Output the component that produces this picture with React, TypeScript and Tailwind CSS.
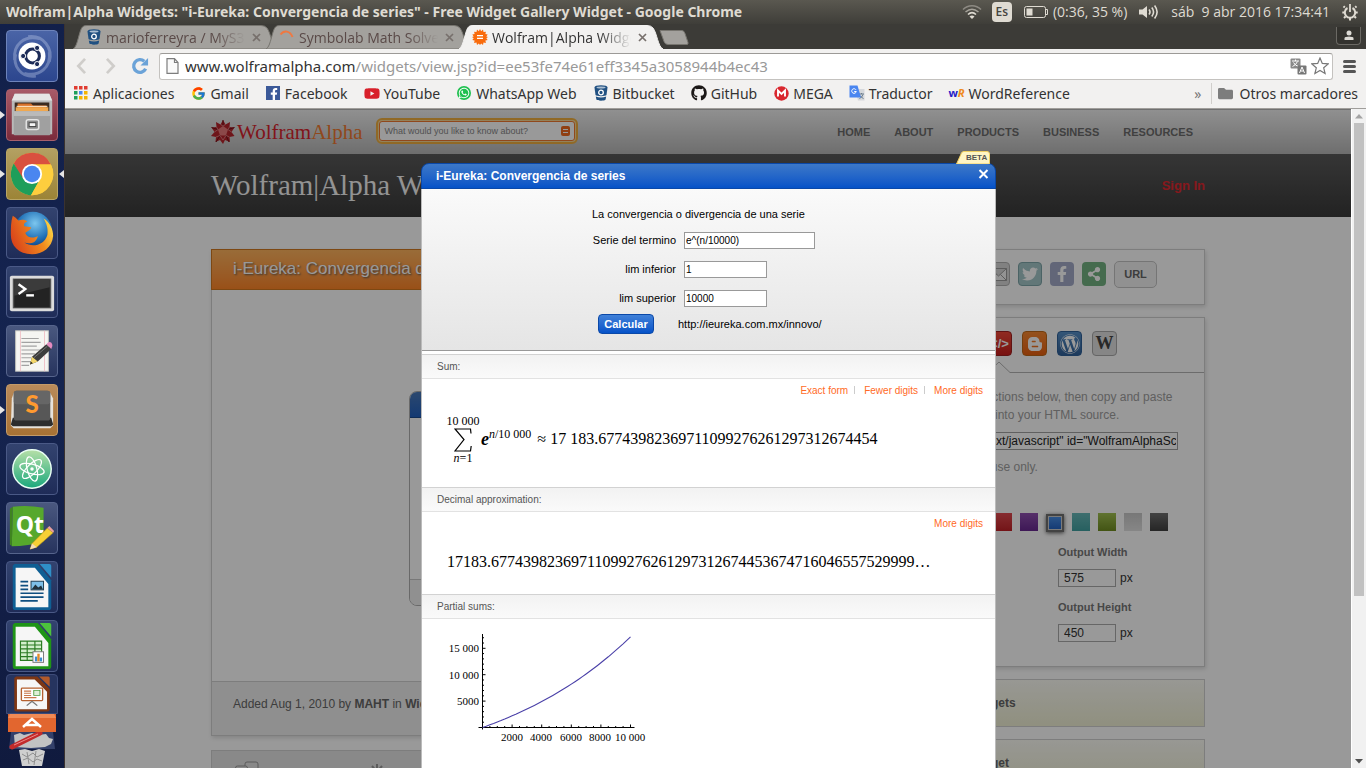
import React from "react";
import { FcGoogle } from "react-icons/fc";
import {
  FaBloggerB,
  FaFacebookF,
  FaFolder,
  FaGithub,
  FaShareAlt,
  FaTwitter,
  FaWhatsapp,
  FaWordpress,
  FaYoutube,
} from "react-icons/fa";

/* ---------- desktop top bar ---------- */

function WifiIcon() {
  return (
    <svg width="20" height="16" viewBox="0 0 20 16" fill="none" strokeWidth="1.5">
      <path d="M1 5.5C6 .5 14 .5 19 5.5" stroke="#8d8a83" />
      <path d="M3.5 8C7.500 4.500 12.500 4.500 16.500 8" stroke="#a5a29a" />
      <path d="M6 10.500C8.500 8 11.500 8 14 10.500" stroke="#dfdbd2" />
      <path d="M7.500 12.500C9 11 11 11 12.500 12.500L10 15z" fill="#dfdbd2" />
    </svg>
  );
}

function SoundIcon() {
  return (
    <svg width="20" height="16" viewBox="0 0 20 16" fill="none" stroke="#dfdbd2" strokeWidth="1.600">
      <path d="M0 5.500h3.500L8 2v12l-4.500-3.500H0z" fill="#dfdbd2" stroke="none" />
      <path d="M10 5.500q2 2.500 0 5M12.800 3.500q3.500 4.500 0 9M15.600 1.500q5 6.500 0 13" />
    </svg>
  );
}

function GearPowerIcon() {
  return (
    <svg width="16" height="18" viewBox="0 0 16 18" fill="none" stroke="#dfdbd2">
      <path d="M5.500 5A5.200 5.200 0 1 0 10.500 5" strokeWidth="2" />
      <path d="M8 1v8" strokeWidth="1.800" />
      <path d="M2.800 4.500L1.500 3.200M13.200 4.500l1.300-1.300M2.500 9.500H.3M13.500 9.500h2.200M3.500 13.500L2 15M12.500 13.500L14 15M8 15v2.500" strokeWidth="2" />
    </svg>
  );
}

function TopBar() {
  return (
    <header className="flex h-6 shrink-0 items-center justify-between bg-gradient-to-b from-[#5a5850] to-[#3f3e39] pb-px pl-1.5 pr-2 text-[#dfdbd2]">
      <h1 className="truncate font-['Noto_Sans',sans-serif] text-[14px] font-bold">
        Wolfram|Alpha Widgets: "i-Eureka: Convergencia de series" - Free Widget Gallery Widget - Google Chrome
      </h1>
      <div className="flex shrink-0 items-center text-[14px]">
        <WifiIcon />
        <span className="ml-2.5 flex h-5 w-5 items-center justify-center rounded-sm bg-[#dfdbd2] text-[12px] font-semibold text-[#45443f]">Es</span>
        <svg className="ml-3" width="25" height="14" viewBox="0 0 25 14" fill="none" stroke="#dfdbd2">
          <rect x=".5" y="1.500" width="21" height="11" rx="2" />
          <path d="M22 4.500h1.500v5H22" />
          <rect x="2.500" y="3.500" width="6" height="7" fill="#dfdbd2" stroke="none" />
        </svg>
        <span className="ml-1">(0:36, 35 %)</span>
        <span className="ml-3"><SoundIcon /></span>
        <span className="ml-3 whitespace-pre">sáb  9 abr 2016 17:34:41</span>
        <span className="ml-3"><GearPowerIcon /></span>
      </div>
    </header>
  );
}

/* ---------- launcher ---------- */

function UbuntuIcon() {
  return (
    <svg viewBox="0 0 52 52" className="h-full w-full">
      <g fill="none" stroke="#b9c6e6" strokeWidth="3" opacity=".4">
        <path d="M8 30C6 14 18 4 34 8" />
        <path d="M22 6c16-2 26 12 22 26" />
        <path d="M44 22c2 16-10 26-26 22" />
        <path d="M30 47C14 49 6 36 9 24" />
      </g>
      <circle cx="26" cy="26" r="14" fill="#fff" />
      <circle cx="26.500" cy="26" r="7.200" fill="none" stroke="#1d2c58" strokeWidth="3.200" />
      <g fill="#1d2c58" stroke="#fff" strokeWidth="1">
        <circle cx="16.800" cy="26" r="2.700" />
        <circle cx="31.300" cy="17.600" r="2.700" />
        <circle cx="31.300" cy="34.400" r="2.700" />
      </g>
    </svg>
  );
}

function FilesIcon() {
  return (
    <svg viewBox="0 0 52 52" className="h-full w-full">
      <path d="M8 4h36l3 7v35H5V11z" fill="#b9b9b9" />
      <path d="M8 4h36l3 7H5z" fill="#e6e6e6" />
      <rect x="8" y="13" width="36" height="10" fill="#3a2a20" />
      <path d="M11 14h14l2 2h14v7H11z" fill="#d8702a" />
      <path d="M9 18h34v4H9z" fill="#f0a850" />
      <path d="M10 17h32" stroke="#fff3dc" />
      <rect x="7" y="22" width="38" height="25" rx="1" fill="#a0a0a0" />
      <rect x="7" y="22" width="38" height="5" fill="#bababa" />
      <rect x="20" y="31" width="13" height="10" rx="2" fill="#8b8b8b" stroke="#e4e4e4" strokeWidth="1.500" />
      <rect x="23" y="34" width="7" height="4" fill="#f5f5f5" stroke="#444" />
    </svg>
  );
}

function ChromeIcon() {
  return (
    <svg viewBox="0 0 52 52" className="h-full w-full">
      <circle cx="26" cy="26" r="22" fill="#fc3" />
      <path d="M7 15A22 22 0 0 1 45.700 16H26L16 32z" fill="#d9503f" />
      <path d="M7 15A22 22 0 0 0 25 48L34.500 31.500 26 36 17 31z" fill="#1e9e5a" />
      <path d="M45.700 16H26l8.500 15L25 48A22 22 0 0 0 45.700 16z" fill="#fdce3e" />
      <circle cx="26" cy="26" r="10.500" fill="#fff" />
      <circle cx="26" cy="26" r="8.600" fill="#4a86f0" />
    </svg>
  );
}

function FirefoxIcon() {
  return (
    <svg viewBox="0 0 52 52" className="h-full w-full">
      <defs>
        <radialGradient id="ffGlobe" cx=".55" cy=".3" r=".7">
          <stop offset="0" stopColor="#7cc6ee" />
          <stop offset=".6" stopColor="#1f6fb6" />
          <stop offset="1" stopColor="#0d2f6a" />
        </radialGradient>
        <linearGradient id="ffTail" x1="0" x2="1" y1=".6" y2=".2">
          <stop offset="0" stopColor="#d9431b" />
          <stop offset=".6" stopColor="#f08a1d" />
          <stop offset="1" stopColor="#ffe14a" />
        </linearGradient>
      </defs>
      <circle cx="27" cy="24" r="20" fill="url(#ffGlobe)" />
      <path d="M6 8c2 1 4 3 6 5 3-1 6-1 9 1-3 1-4 3-3 5l7 1c0 3-4 4-6 6 2 5 8 6 13 3-1 7-8 9-14 7 9 6 21 2 24-8 1-7-1-12-4-17 7 4 10 12 10 18-1 12-11 19-22 19C12 48 4 39 4 28 4 21 4 14 6 8z" fill="url(#ffTail)" />
    </svg>
  );
}

function TerminalIcon() {
  return (
    <svg viewBox="0 0 52 52" className="h-full w-full">
      <rect x="3" y="9" width="46" height="37" rx="2" fill="#dcdcdc" />
      <rect x="6" y="12" width="40" height="31" fill="#555" />
      <rect x="7.500" y="13" width="37" height="29" fill="#232323" />
      <path d="M7.500 13h37v8L7.500 30z" fill="#3b3b3b" />
      <path d="M12 18l7 5-7 5" fill="none" stroke="#fff" strokeWidth="2.500" />
      <path d="M20 29.500h8" stroke="#fff" strokeWidth="2.500" />
    </svg>
  );
}

function EditorIcon() {
  return (
    <svg viewBox="0 0 52 52" className="h-full w-full">
      <rect x="9" y="5" width="34" height="42" fill="#f5f5f2" stroke="#c6c6c0" />
      <path d="M14 5v42M39 5v42" stroke="#eec2c8" />
      <path d="M15 13h18M15 17h20M15 21h16M15 25h20M15 29h14M15 33h10M15 37h10M15 41h8" stroke="#a2a2a2" strokeWidth="1.200" />
      <path d="M24 40l2-8L41 19l5 5-14 13z" fill="#3c3c3c" />
      <path d="M24 40l2-8 6 5z" fill="#f3d76a" />
      <path d="M24 40l.8-3 2 1.700z" fill="#222" />
      <path d="M41 19l2-2q3-1 4 2 1 2-1 5z" fill="#e58bc0" />
      <path d="M28 33l14-12" stroke="#777" />
    </svg>
  );
}

function SublimeIcon() {
  return (
    <svg viewBox="0 0 52 52" className="h-full w-full">
      <path d="M5 14l2-6h38l3 6v28l-3 3H7l-3-3z" fill="#e6e2dc" />
      <path d="M6 34h40l2 7-2 2H6l-2-2z" fill="#2d2d2d" />
      <rect x="7" y="6" width="38" height="31" rx="3" fill="#575757" />
      <rect x="7" y="6" width="38" height="14" rx="3" fill="#666" />
      <text x="26" y="29" fontSize="25" fontWeight="900" textAnchor="middle" fill="#ff9a2f" fontFamily="Lato, sans-serif">S</text>
    </svg>
  );
}

function AtomIcon() {
  return (
    <svg viewBox="0 0 52 52" className="h-full w-full">
      <defs>
        <linearGradient id="atomDisc" x1="0" x2="0" y1="0" y2="1">
          <stop offset="0" stopColor="#b7e0a8" />
          <stop offset="1" stopColor="#1aa87c" />
        </linearGradient>
      </defs>
      <circle cx="26" cy="26" r="20" fill="url(#atomDisc)" stroke="#eafff5" strokeWidth="1.500" />
      <g fill="none" stroke="#fff" strokeWidth="1.300">
        <ellipse cx="26" cy="26" rx="13" ry="5" transform="rotate(15 26 26)" />
        <ellipse cx="26" cy="26" rx="13" ry="5" transform="rotate(75 26 26)" />
        <ellipse cx="26" cy="26" rx="13" ry="5" transform="rotate(135 26 26)" />
      </g>
      <circle cx="26" cy="26" r="1.800" fill="#fff" />
    </svg>
  );
}

function QtIcon() {
  return (
    <svg viewBox="0 0 52 52" className="h-full w-full">
      <path d="M6 4q15-2 32 1v35q-16 5-33 5z" fill="#56a82c" />
      <path d="M6 4l-3 2v37l2 2z" fill="#3f8420" />
      <text x="9" y="31" fontSize="24" fontWeight="700" fill="#fff" fontFamily="Open Sans, sans-serif">Qt</text>
      <path d="M24 48l2-6 16-16 6 5-17 15z" fill="#f7d035" stroke="#a9861a" strokeWidth=".6" />
      <path d="M24 48l2-6 5 4z" fill="#f5dcb6" />
      <path d="M42 26l2-2 5 5-1 2z" fill="#e9a0a0" />
    </svg>
  );
}

function OfficePage({ edge, fold, children }: { edge: string; fold: string; children: React.ReactNode }) {
  return (
    <svg viewBox="0 0 52 52" preserveAspectRatio="none" className="h-full w-full">
      <path d="M8 2h24l14 17v28q0 3-3 3H9q-3 0-3-3V4z" fill={edge} />
      <path d="M9 6h20l14 17v24H9z" fill="#f6f6f6" />
      <path d="M34 2h10q2 0 2 2v12z" fill={fold} />
      {children}
    </svg>
  );
}

function WriterIcon() {
  return (
    <OfficePage edge="#0f5f94" fold="#2f8fc8">
      <path d="M14 20.500h8M14 24.500h8M14 28.500h8M14 32.500h24M14 36.500h24M14 40.500h18" stroke="#0f4f80" strokeWidth="1.800" />
      <rect x="25" y="20" width="13" height="9" fill="#7ec0e8" stroke="#1d3c50" />
      <path d="M25.500 28.500l4-5 3 3 3-2 2 4z" fill="#22323c" />
    </OfficePage>
  );
}

function CalcIcon() {
  return (
    <OfficePage edge="#1f9417" fold="#4cc23c">
      <path d="M14 21h22v20H14z" fill="#d3efcb" />
      <path d="M14 21h22v20H14zM14 25h22M14 29h22M14 33h22M14 37h22M21 21v20M29 21v20" fill="none" stroke="#2a7a22" strokeWidth="1.200" />
      <rect x="27" y="32" width="11" height="11" fill="#fff" stroke="#777" />
      <path d="M29 42v-5h2.500v5z" fill="#3b8ed0" />
      <path d="M31.500 42v-8H34v8z" fill="#e58a2a" />
      <path d="M34 42v-4h2.500v4z" fill="#3b8ed0" />
    </OfficePage>
  );
}

function ImpressIcon() {
  return (
    <OfficePage edge="#7e3613" fold="#b35a2a">
      <rect x="14" y="18" width="24" height="17" rx="1" fill="#fff" stroke="#b5602f" strokeWidth="1.500" />
      <path d="M17 22h8M17 25h8M17 28h8M17 31h14" stroke="#c8774a" strokeWidth="1.500" />
      <rect x="28" y="21" width="7" height="7" fill="#dff0d8" stroke="#4a9a3a" />
      <path d="M20 42l6-6 6 6" fill="none" stroke="#777" strokeWidth="1.500" />
    </OfficePage>
  );
}

type App = { label: string; tile: string; icon: React.ReactNode; running?: boolean; active?: boolean };

const apps: App[] = [
  { label: "Buscar", tile: "from-[#4a64a6] to-[#2c468e] border-[#6d83bb]", icon: <UbuntuIcon /> },
  { label: "Archivos", tile: "from-[#a85a68] to-[#7a2b3b] border-[#a8606c]", icon: <FilesIcon />, running: true },
  { label: "Google Chrome", tile: "from-[#b3a062] to-[#9c8436] border-[#b8a566]", icon: <ChromeIcon />, running: true, active: true },
  { label: "Firefox", tile: "from-[#33436f] to-[#1f2c58] border-[#4a5986]", icon: <FirefoxIcon /> },
  { label: "Terminal", tile: "from-[#33436f] to-[#1f2c58] border-[#4a5986]", icon: <TerminalIcon /> },
  { label: "Editor de textos", tile: "from-[#4a587f] to-[#27345e] border-[#56648c]", icon: <EditorIcon /> },
  { label: "Sublime Text", tile: "from-[#b98a5a] to-[#a87234] border-[#c39a68]", icon: <SublimeIcon />, running: true },
  { label: "Atom", tile: "from-[#33436f] to-[#1f2c58] border-[#4a5986]", icon: <AtomIcon /> },
  { label: "Qt Creator", tile: "from-[#4a587f] to-[#27345e] border-[#56648c]", icon: <QtIcon /> },
  { label: "Writer", tile: "from-[#33436f] to-[#1f2c58] border-[#4a5986]", icon: <WriterIcon /> },
  { label: "Calc", tile: "from-[#33436f] to-[#1f2c58] border-[#4a5986]", icon: <CalcIcon /> },
];

function Launcher() {
  return (
    <nav aria-label="Lanzador" className="flex w-[65px] shrink-0 flex-col gap-[7px] overflow-hidden border-r border-[#3a3230] bg-gradient-to-b from-[#12204a] via-[#152450] to-[#101a3e] pt-1.5">
      {apps.map((a) => (
        <div key={a.label} className="flex shrink-0 items-center">
          <span className="w-1.5">
            {a.running && (
              <svg width="5" height="8" viewBox="0 0 5 8"><path d="M0 0l5 4-5 4z" fill="#e6e6e6" /></svg>
            )}
          </span>
          <button aria-label={a.label} className={"h-[52px] w-[52px] rounded-[4px] border bg-gradient-to-b " + a.tile}>
            {a.icon}
          </button>
          <span className="flex w-1.5 justify-end">
            {a.active && (
              <svg width="5" height="8" viewBox="0 0 5 8"><path d="M5 0L0 4l5 4z" fill="#e6e6e6" /></svg>
            )}
          </span>
        </div>
      ))}
      <div className="-mt-[5px] flex shrink-0 flex-col items-center">
        <button aria-label="Impress" className="h-10 w-[52px] rounded-t-[4px] border border-[#3d4b78] bg-[#26345f] px-0.5"><ImpressIcon /></button>
        <button aria-label="Centro de software" className="h-[18px] w-12 bg-[#e2662f]">
          <svg viewBox="0 0 48 18" className="h-full w-full">
            <path d="M2 0h44l2 4H0z" fill="#f08a55" />
            <path d="M15 13l9-8 9 8M18 11h12" fill="none" stroke="#fff" strokeWidth="2.500" />
          </svg>
        </button>
        <button aria-label="Configuración y papelera" className="h-9 w-[52px]">
          <svg viewBox="0 0 52 36" className="h-full w-full">
            <path d="M5 0h42l2 17H3z" fill="#33406a" />
            <path d="M8 3l6-2 4 2 8-2 6 2 8-1 3 4 4 1-2 5-6 3-14 1-16-1z" fill="#c2c2c2" />
            <path d="M6 15L34 1" stroke="#c22b2b" strokeWidth="5" strokeLinecap="round" />
            <path d="M8 13L32 2" stroke="#e88" strokeWidth="1" />
            <path d="M13 18l6-1 7 2 7-2 6 2-3 15H16z" fill="#cfcfcf" />
            <path d="M16 22l5 3 6-4 4 4 6-3M17 28l5-2 5 4 4-3 5 2M21 20l2 12M30 19l-2 14" fill="none" stroke="#8f8f8f" />
          </svg>
        </button>
      </div>
    </nav>
  );
}

/* ---------- browser chrome ---------- */

function BucketIcon() {
  return (
    <svg width="16" height="16" viewBox="0 0 16 16">
      <path d="M1.500 2.500C1.500 1 4 .3 8 .3s6.500.7 6.500 2.200l-1 7.500c-.5 1.500-10.500 1.500-11 0z" fill="#205081" />
      <path d="M2.800 11.500q5.200 2 10.400 0l-.6 3c-.6 1.600-8.600 1.600-9.200 0z" fill="#205081" />
      <ellipse cx="8" cy="2.600" rx="4.500" ry="1" fill="#e6edf3" opacity=".7" />
      <circle cx="8" cy="7.500" r="2.300" fill="none" stroke="#fff" strokeWidth="1.300" />
    </svg>
  );
}

function WolframBadge() {
  return (
    <svg width="16" height="16" viewBox="0 0 16 16">
      <path d="M8 0l1.200 2.200L11 .6l.5 2.500 2.400-.4-.5 2.400 2.300.5-1.400 1.900L16 8l-1.700 1.200 1.400 1.700-2.300.6.5 2.400-2.400-.4-.5 2.400-1.800-1.400L8 16l-1.200-1.500L5 15.900l-.5-2.400-2.400.4.5-2.400-2.300-.6 1.400-1.700L0 8l1.700-.5L.3 5.600l2.300-.5-.5-2.400 2.400.4L5 .6l1.800 1.600z" fill="#f96b0c" />
      <path d="M5 6h6v1.300H5zM5 8.700h6V10H5z" fill="#fff" />
    </svg>
  );
}

function Tab({ title, icon, active }: { title: string; icon: React.ReactNode; active?: boolean }) {
  const fill = active ? "#f2f1f0" : "#a3a19d";
  return (
    <div className={"relative -ml-[11px] flex h-6 w-[204px] items-center pl-3.5 pr-3.5 text-[14px] " + (active ? "z-10 text-[#333]" : "text-[#5a4a48]")}>
      <svg className="absolute inset-0 h-full w-full" viewBox="0 0 204 24" preserveAspectRatio="none">
        <path d="M0 24C5 22 6 4 10 1.500Q11 .5 14 .5H188Q192 .5 194 3C198 8 199 22 204 24z" fill={fill} stroke={active ? "#f2f1f0" : "#77756f"} />
      </svg>
      <span className="relative -ml-px flex w-4 justify-center">{icon}</span>
      <span className="relative ml-1 w-[139px] overflow-hidden whitespace-nowrap [mask-image:linear-gradient(to_right,black_78%,transparent)]">{title}</span>
      <button aria-label="Cerrar pestaña" className="relative ml-[7px]">
        <svg width="9" height="9" viewBox="0 0 9 9"><path d="M1 1l7 7M8 1L1 8" stroke="#77706c" strokeWidth="1.700" /></svg>
      </button>
    </div>
  );
}

function TabStrip() {
  return (
    <div className="flex h-[25px] items-end bg-[#3c3b37] pl-[19px]">
      <Tab title="marioferreyra / MyS3 Repo" icon={<BucketIcon />} />
      <Tab
        title="Symbolab Math Solver"
        icon={<svg width="16" height="16" viewBox="0 0 16 16"><path d="M1.500 5.500C5 1 11 1.500 13.500 8" fill="none" stroke="#f07840" strokeWidth="2" /></svg>}
      />
      <Tab title="Wolfram|Alpha Widgets" active icon={<WolframBadge />} />
      <button aria-label="Nueva pestaña" className="-ml-1 mb-1">
        <svg width="30" height="15" viewBox="0 0 30 15"><path d="M1 .5h22q2 0 3 3l3 9q.5 2-1 2H9q-3 0-4-3z" fill="#a3a19d" stroke="#77756f" /></svg>
      </button>
      <button aria-label="Usuario" className="mb-1 ml-auto mr-[5px] flex h-[18px] w-[25px] items-center justify-center rounded-b-[4px] border border-t-0 border-[#6b6964] bg-[#33322e]">
        <svg width="10" height="11" viewBox="0 0 10 11" fill="#dcdad5"><circle cx="5" cy="3" r="2.500" /><path d="M.5 10V8Q1 6.500 5 6.500T9.500 8v2z" /></svg>
      </button>
    </div>
  );
}

function Toolbar() {
  return (
    <div className="flex h-[31px] items-center bg-[#f2f1f0] pl-2 pr-2.5 pt-[3px]">
      <button aria-label="Atrás" className="flex w-4 justify-center">
        <svg width="14" height="18" viewBox="0 0 14 20"><path d="M11.500 2L4 10l7.500 8" fill="none" stroke="#cfcdca" strokeWidth="3" /></svg>
      </button>
      <button aria-label="Adelante" className="ml-3.5 flex w-4 justify-center">
        <svg width="14" height="18" viewBox="0 0 14 20"><path d="M2.500 2L10 10l-7.500 8" fill="none" stroke="#cfcdca" strokeWidth="3" /></svg>
      </button>
      <button aria-label="Recargar" className="ml-3">
        <svg width="18" height="18" viewBox="0 0 19 19">
          <path d="M15.500 12.500A6.700 6.700 0 1 1 14 4.500" fill="none" stroke="#6ba3d8" strokeWidth="3.500" />
          <path d="M18 1v8h-8z" fill="#6ba3d8" />
        </svg>
      </button>
      <div className="ml-2.5 flex h-[27px] flex-1 items-center rounded-[3px] border border-[#c4c2bf] border-t-[#9c9a97] bg-white pl-1.5 pr-[3px]">
        <svg width="13" height="16" viewBox="0 0 13 16"><path d="M1 .7h7.500L12 4.500v10.800H1zM8.500.7v3.800H12" fill="#fafafa" stroke="#7d7d7d" strokeWidth="1.200" /></svg>
        <p className="ml-1.5 flex-1 truncate font-['Noto_Sans',sans-serif] text-[15px] text-[#999]">
          <span className="text-[#333]">www.wolframalpha.com</span>/widgets/view.jsp?id=ee53fe74e61eff3345a3058944b4ec43
        </p>
        <button aria-label="Traducir">
          <svg width="17" height="17" viewBox="0 0 17 17">
            <rect x=".5" y=".5" width="10" height="10" rx="1" fill="#8a8a8a" />
            <path d="M2 3h7M5.500 1.500V3M7.500 3.500Q6 7 2.500 8.500M3.500 4.500Q5 7.500 8.500 8.500" stroke="#fff" fill="none" />
            <rect x="7.500" y="7.500" width="9" height="9" rx="1" fill="#777" />
            <path d="M9.500 15l2.500-6 2.500 6M10.500 13h3" stroke="#fff" fill="none" />
          </svg>
        </button>
        <button aria-label="Añadir a marcadores" className="ml-1">
          <svg width="18" height="18" viewBox="0 0 18 18"><path d="M9 1l2.300 5.400 5.900.5-4.500 3.900 1.400 5.800L9 13.500l-5.100 3.100 1.400-5.800L.8 6.900l5.900-.5z" fill="#fff" stroke="#777" strokeWidth="1.200" /></svg>
        </button>
      </div>
      <button aria-label="Menú" className="ml-2.5 flex flex-col gap-0.5">
        <i className="h-[3px] w-[13px] rounded-sm bg-[#555]" />
        <i className="h-[3px] w-[13px] rounded-sm bg-[#555]" />
        <i className="h-[3px] w-[13px] rounded-sm bg-[#555]" />
      </button>
    </div>
  );
}

function AppsGrid() {
  const colors = ["#e03c31", "#e03c31", "#e03c31", "#1e9e5a", "#4a86f0", "#f5b400", "#1e9e5a", "#f5b400", "#f5b400"];
  return (
    <svg width="14" height="14" viewBox="0 0 14 14">
      {colors.map((c, i) => (
        <rect key={i} x={(i % 3) * 5} y={Math.floor(i / 3) * 5} width="3.500" height="3.500" fill={c} />
      ))}
    </svg>
  );
}

const bookmarks: { label: string; icon: React.ReactNode }[] = [
  { label: "Aplicaciones", icon: <AppsGrid /> },
  { label: "Gmail", icon: <FcGoogle size={15} /> },
  {
    label: "Facebook",
    icon: (
      <span className="flex h-3.5 w-3.5 items-end justify-end overflow-hidden bg-[#3b5998] text-white"><FaFacebookF size={12} /></span>
    ),
  },
  { label: "YouTube", icon: <FaYoutube size={17} color="#d8202a" /> },
  {
    label: "WhatsApp Web",
    icon: <span className="flex h-3.5 w-3.5 items-center justify-center rounded-full bg-[#1fc04f] text-white"><FaWhatsapp size={12} /></span>,
  },
  { label: "Bitbucket", icon: <BucketIcon /> },
  { label: "GitHub", icon: <FaGithub size={16} color="#1b1817" /> },
  {
    label: "MEGA",
    icon: (
      <svg width="15" height="15" viewBox="0 0 15 15"><circle cx="7.500" cy="7.500" r="7.200" fill="#d9272e" /><path d="M4 10.500v-6L7.500 8 11 4.500v6" fill="none" stroke="#fff" strokeWidth="1.900" /></svg>
    ),
  },
  {
    label: "Traductor",
    icon: (
      <svg width="16" height="16" viewBox="0 0 16 16">
        <path d="M6 4h9.500v11.500H9z" fill="#d5d8dc" />
        <path d="M10 9h5M12.500 8v1M14 9.500q-1 3-3.500 4M11 10.500q1 2 3.500 3" fill="none" stroke="#6a7c8c" />
        <path d="M.5.500h8L12 12.500H.5z" fill="#4a86f0" />
        <path d="M7 4.800A2.300 2.300 0 1 0 7.300 6.500H5.200" fill="none" stroke="#fff" />
      </svg>
    ),
  },
  {
    label: "WordReference",
    icon: (
      <span className="text-[11px] font-bold leading-4 text-[#2620c8]">w<span className="italic text-[#ee8a20]">R</span></span>
    ),
  },
];

function BookmarksBar() {
  return (
    <div className="flex h-[29px] items-center border-b border-[#a09e9b] bg-[#f2f1f0] pb-0.5 pl-2 pr-2 font-['Noto_Sans',sans-serif] text-[14px] text-[#333]">
      <ul className="flex gap-4">
        {bookmarks.map((b) => (
          <li key={b.label}>
            <a href="#" className="flex items-center gap-1 whitespace-nowrap">
              <span className="flex w-4 justify-center">{b.icon}</span>
              {b.label}
            </a>
          </li>
        ))}
      </ul>
      <button aria-label="Más marcadores" className="ml-auto mr-2.5 text-[#777]">»</button>
      <a href="#" className="flex items-center gap-1.5 whitespace-nowrap border-l border-[#d0cecb] pl-1.5">
        <FaFolder size={15} color="#7d7d7d" />
        Otros marcadores
      </a>
    </div>
  );
}

/* ---------- Wolfram|Alpha page ---------- */

function SpikeyIcon() {
  return (
    <svg width="24" height="24" viewBox="0 0 24 24">
      <path d="M12 0l2.500 4.500L19 2l-.5 5 5 .5-3 4.500 3 4-5 1 .5 5-5-2L12 24l-3-4-4.500 2L5 17l-5-1 3.500-4L.5 7.500l5-.5L5 2l4.500 2.500z" fill="#b8242c" />
      <path d="M12 6l5 3.500-2 6H9l-2-6z" fill="#e8787a" />
      <path d="M12 6V0M17 9.500l6.500-2M15 15.500l3 6.500M9 15.500L5 22M7 9.500L.5 7.500" stroke="#701018" />
      <path d="M12 6L9.500 4.500M12 6l2.500-1.500M17 9.500L18.500 7M17 9.500l3.500 2.500M15 15.500l3.500 1.500M15 15.500L12 20l-3-4.500L5 17M7 9.500L5.500 7M7 9.500L3.500 12" fill="none" stroke="#e8989a" strokeWidth=".7" />
    </svg>
  );
}

function SiteHeader() {
  const links = ["HOME", "ABOUT", "PRODUCTS", "BUSINESS", "RESOURCES"];
  return (
    <div className="border-t border-[#bbb] bg-gradient-to-b from-[#f0f0f0] to-[#b8b8b8]">
      <div className="mx-auto flex h-11 w-[994px] items-center">
        <a href="#" className="flex items-center font-[Liberation_Serif,serif] text-[21px] leading-6 text-[#d8232c]">
          <SpikeyIcon />
          <span className="ml-0.5">Wolfram<span className="text-[#f07830]">Alpha</span></span>
        </a>
        <label className="mb-0.5 ml-3.5 flex h-[26px] w-[202px] items-center rounded-[6px] border-2 border-[#f0b040] bg-[#f5d898] p-px">
          <span className="flex h-full w-full items-center rounded-[3px] border border-[#f07830] bg-white px-1">
            <input aria-label="Search" placeholder="What would you like to know about?" className="min-w-0 flex-1 text-[9px] leading-4 outline-none placeholder:text-[#888]" />
            <svg width="9" height="10" viewBox="0 0 9 10"><rect width="9" height="10" rx="2" fill="#f06a20" /><path d="M2 3.500h5M2 6.500h5" stroke="#fff" /></svg>
          </span>
        </label>
        <ul className="ml-auto flex gap-6 pr-3 text-[11px] font-bold text-[#6c6c6c]">
          {links.map((l) => (
            <li key={l}><a href="#">{l}</a></li>
          ))}
        </ul>
      </div>
    </div>
  );
}

function EmbedButton({ label, className, children }: { label: string; className: string; children: React.ReactNode }) {
  return (
    <button aria-label={label} className={"flex h-[25px] w-[25px] items-center justify-center rounded-[4px] border " + className}>
      {children}
    </button>
  );
}

const swatches = [
  { name: "Red", cls: "bg-gradient-to-b from-[#e04a50] to-[#c02026]" },
  { name: "Purple", cls: "bg-gradient-to-b from-[#9050b0] to-[#682890]" },
  { name: "Blue", cls: "mt-px bg-gradient-to-b from-[#4a90e8] to-[#2060c0] border-2 border-[#707070] outline outline-1 outline-offset-[-3px] outline-[#ccc] shadow-[0_1px_4px_#555]" },
  { name: "Teal", cls: "bg-gradient-to-b from-[#68b8b8] to-[#40a0a0]" },
  { name: "Green", cls: "bg-gradient-to-b from-[#a0c050] to-[#708c20]" },
  { name: "Silver", cls: "bg-gradient-to-b from-[#c8c8c8] to-[#e0e0e0]" },
  { name: "Black", cls: "bg-gradient-to-b from-[#707070] to-[#404040]" },
];

function SizeField({ id, label, value }: { id: string; label: string; value: string }) {
  return (
    <div>
      <label htmlFor={id} className="block text-[11px] font-bold leading-4 text-[#777]">{label}</label>
      <div className="mt-[9px] flex items-center gap-1 text-[12px] text-[#333]">
        <input id={id} defaultValue={value} className="h-[18px] w-[58px] border border-[#aaa] bg-white px-[5px]" />
        <span>px</span>
      </div>
    </div>
  );
}

function Sidebar() {
  const shadow = "shadow-[1px_2px_4px_#ddd]";
  return (
    <aside className="flex w-[260px] shrink-0 flex-col gap-3">
      <section className={"flex h-14 justify-end gap-2 border border-[#d0d0d0] pr-[47px] pt-[11px] " + shadow}>
        <button aria-label="Email" className="mt-px flex h-6 w-6 items-center justify-center rounded-[4px] border border-[#b0b0b0] bg-[#d8d8d8]">
          <svg width="17" height="13" viewBox="0 0 17 13"><path d="M.5.500h16v12H.5zM.5.500l8 7.500 8-7.500M.5 12.500l6-6M16.500 12.500l-6-6" fill="#f6f6f6" stroke="#999" /></svg>
        </button>
        <button aria-label="Twitter" className="mt-px flex h-6 w-6 items-center justify-center rounded-[4px] border border-[#7ea5a8] bg-[#a4c6c8] text-white"><FaTwitter size={16} /></button>
        <button aria-label="Facebook" className="mt-px flex h-6 w-6 items-end justify-end rounded-[4px] bg-[#a3abc9] pb-1 pr-1 text-white"><FaFacebookF size={16} /></button>
        <button aria-label="Share" className="mt-px flex h-6 w-6 items-center justify-center rounded-[4px] bg-[#74b282] text-white"><FaShareAlt size={14} /></button>
        <button className="h-[27px] w-[43px] rounded-[5px] border border-[#c4c4c4] bg-[#f2f2f2] text-[11px] font-bold text-[#666]">URL</button>
      </section>

      <section className={"border border-[#d0d0d0] " + shadow}>
        <div className="flex justify-end gap-2.5 pr-[87px] pt-[13px]">
          <EmbedButton label="HTML" className="border-[#a02020] bg-gradient-to-b from-[#f04838] to-[#c81c1c] text-[13px] font-bold text-white">&lt;/&gt;</EmbedButton>
          <EmbedButton label="Blogger" className="border-[#c06818] bg-gradient-to-b from-[#f88830] to-[#e86010] text-white"><FaBloggerB size={16} /></EmbedButton>
          <EmbedButton label="WordPress" className="border-[#30629a] bg-gradient-to-b from-[#5890c8] to-[#306098] text-white"><FaWordpress size={20} /></EmbedButton>
          <EmbedButton label="Wiki" className="border-[#a8a8a8] bg-[#e0e0e0] font-[Liberation_Serif,serif] text-[18px] font-bold text-[#444]">W</EmbedButton>
        </div>
        <svg className="mt-[5px] h-3 w-full" viewBox="0 0 258 12" fill="none">
          <path d="M0 11.500H42L53 1l11 10.500h194" stroke="#b4b4b4" />
        </svg>
        <div className="pb-6 pl-[17px] pr-[26px] text-[12px] leading-[18px] text-[#a0a0a0]">
          <p className="mt-[15px] whitespace-nowrap">instructions below, then copy and paste<br />script into your HTML source.</p>
          <input aria-label="Embed code" defaultValue={'text/javascript" id="WolframAlphaScript'} className="mt-2 h-[18px] w-full border border-[#a0a0a0] bg-white pl-[22px] pr-px text-[#222]" />
          <p className="mt-2">Web use only.</p>
          <div className="mt-[37px] flex h-5 justify-end gap-2 pr-2.5">
            {swatches.map((s) => (
              <button key={s.name} aria-label={s.name} className={"h-[18px] w-[18px] " + s.cls} />
            ))}
          </div>
          <div className="ml-[95px] mt-[11px] flex flex-col gap-3">
            <SizeField id="outWidth" label="Output Width" value="575" />
            <SizeField id="outHeight" label="Output Height" value="450" />
          </div>
        </div>
      </section>

      <section className="flex h-12 items-center border border-[#d0d0d0] bg-gradient-to-b from-[#fdfdf6] to-[#f0f0d4] pl-[23px] text-[12px] font-bold text-[#666]">Widgets</section>
      <section className="flex h-12 items-center border border-[#d0d0d0] bg-gradient-to-b from-[#fdfdf6] to-[#f0f0d4] pl-[23px] text-[12px] font-bold text-[#666]">Widget</section>
    </aside>
  );
}

function WidgetPanel() {
  return (
    <div className="flex min-w-0 flex-1 flex-col gap-3.5">
      <section className="shadow-[1px_2px_4px_#ddd]">
        <h3 className="flex h-[41px] items-center border border-[#d07820] bg-gradient-to-b from-[#ffb45e] to-[#ff8628] pb-0.5 pl-[21px] text-[17px] text-white [text-shadow:1px_1px_2px_#555]">
          i-Eureka: Convergencia de series
        </h3>
        <div className="flex h-[391px] justify-center border-x border-[#d0d0d0] pt-[101px]">
          <div className="flex h-[215px] w-[324px] flex-col overflow-hidden rounded-[8px] border border-[#b0b0b0]">
            <div className="h-[26px] border-b border-[#1a4a90] bg-gradient-to-b from-[#4878b8] to-[#2060c0]" />
            <div className="flex-1" />
            <div className="h-[26px] border-t border-[#c8c8c8] bg-[#f0f0f0]" />
          </div>
        </div>
        <p className="flex h-[55px] items-center border border-[#d0d0d0] bg-[#eee] pb-2.5 pl-[21px] text-[12px] text-[#666]">
          <span>Added Aug 1, 2010 by <b>MAHT</b> in <b>Widgets</b></span>
        </p>
      </section>
      <section className="h-24 border border-[#d0d0d0] bg-[#e4e4e4] pl-[23px] pt-[7px]">
        <svg width="160" height="24" viewBox="0 0 160 24" fill="none" stroke="#999">
          <rect x="10" y="4" width="13" height="10" rx="2" />
          <rect x=".5" y="8" width="12" height="10" rx="2" fill="#e4e4e4" />
          <path d="M142 6v16M137 8l10 12M147 8l-10 12" strokeWidth="2" />
        </svg>
      </section>
    </div>
  );
}

/* ---------- widget dialog ---------- */

function Field({ id, label, value, width }: { id: string; label: string; value: string; width: string }) {
  return (
    <div className="flex items-center gap-2">
      <label htmlFor={id} className="w-[84px] text-right">{label}</label>
      <input id={id} defaultValue={value} className={"h-[17px] border border-[#999] bg-white pl-px text-[10px] " + width} />
    </div>
  );
}

function Pod({ title, children }: { title: string; children: React.ReactNode }) {
  return (
    <section>
      <h4 className="h-[25px] border-b border-t border-b-[#e2e2e2] border-t-[#d2d2d2] bg-gradient-to-b from-[#f2f2f2] to-[#fafafa] pl-[15px] text-[10px] leading-[23px] text-[#555]">{title}</h4>
      {children}
    </section>
  );
}

function PodLinks({ links }: { links: string[] }) {
  return (
    <ul className="flex h-[22px] items-center justify-end gap-2.5 pr-3 text-[10px] text-[#ff6a26]">
      {links.map((l, i) => (
        <li key={l} className="flex items-center gap-[9px]">
          {i > 0 && <span className="-ml-1 h-2 w-px bg-[#ccc]" />}
          <a href="#">{l}</a>
        </li>
      ))}
    </ul>
  );
}

function PartialSumsChart() {
  const x0 = 37.5;
  const y0 = 101.5;
  const sx = 148 / 10000;
  const sy = 26.4 / 5000;
  const curve = Array.from({ length: 41 }, (_, i) => {
    const n = i * 250;
    const s = 10000 * (Math.exp(n / 10000) - 1);
    return `${i ? "L" : "M"}${(x0 + n * sx).toFixed(1)} ${(y0 - s * sy).toFixed(1)}`;
  }).join("");
  return (
    <svg width="210" height="124" viewBox="0 0 210 124" fontFamily="Liberation Serif, serif" fontSize="11" className="block">
      <path d={`M${x0} 8V${y0 + 2}M${x0 - 4} ${y0}H189.500`} stroke="#000" />
      {Array.from({ length: 20 }, (_, i) => i + 1).map((i) => (
        <path key={i} d={`M${x0 + i * 500 * sx} ${y0}v${i % 4 === 0 ? -3 : -1.5}`} stroke="#000" />
      ))}
      {Array.from({ length: 17 }, (_, i) => i + 1).map((i) => (
        <path key={i} d={`M${x0} ${y0 - i * 1000 * sy}h${i % 5 === 0 ? 3 : 1.5}`} stroke="#000" />
      ))}
      <path d={curve} fill="none" stroke="#4a40a8" strokeWidth="1.100" />
      <g textAnchor="end">
        <text x="34" y="26">15 000</text>
        <text x="34" y="53">10 000</text>
        <text x="34" y="79">5000</text>
      </g>
      <g textAnchor="middle">
        <text x="67" y="115">2000</text>
        <text x="96" y="115">4000</text>
        <text x="126" y="115">6000</text>
        <text x="155" y="115">8000</text>
        <text x="185" y="115">10 000</text>
      </g>
    </svg>
  );
}

function WidgetDialog() {
  return (
    <div role="dialog" aria-label="i-Eureka: Convergencia de series" className="relative mt-[54px] flex w-[575px] flex-col">
      <span className="absolute -top-3 right-[6px] h-[13px] w-[34px]">
        <svg className="absolute inset-0" width="34" height="13" viewBox="0 0 34 13"><path d="M.5 13L5.500 2Q6 .5 8 .5H31Q33.500.500 33.500 3v10z" fill="#fff5c4" stroke="#f0cf60" /></svg>
        <span className="relative block pl-2.5 text-[8px] font-bold leading-[13px] text-[#555]">BETA</span>
      </span>
      <div className="flex h-[26px] shrink-0 items-center justify-between rounded-t-[8px] border border-[#0a48a8] bg-gradient-to-b from-[#3c78c8] to-[#0452c8] pb-px pl-3.5 pr-1.5 text-[12px] font-bold text-white">
        <h2>i-Eureka: Convergencia de series</h2>
        <button aria-label="Close" className="mb-1">
          <svg width="11" height="10" viewBox="0 0 11 10"><path d="M1.500 1l8 8M9.500 1l-8 8" stroke="#fff" strokeWidth="2" /></svg>
        </button>
      </div>
      <div className="flex-1 border-x border-[#bbb] bg-white font-[Liberation_Sans,sans-serif]">
        <form onSubmit={(e) => e.preventDefault()} className="border-b border-[#999] bg-gradient-to-b from-[#fafafa] to-[#e5e5e5] pb-4 pl-[170px] pt-[17px] text-[11px] text-black">
          <p className="leading-4">La convergencia o divergencia de una serie</p>
          <div className="mt-2.5 flex flex-col gap-3">
            <Field id="serie" label="Serie del termino" value="e^(n/10000)" width="w-[131px]" />
            <Field id="inf" label="lim inferior" value="1" width="w-[83px]" />
            <Field id="sup" label="lim superior" value="10000" width="w-[83px]" />
          </div>
          <div className="mt-[7px] flex items-center gap-6 pl-1.5">
            <button type="submit" className="h-5 w-14 rounded-[4px] border border-[#0a48a8] bg-gradient-to-b from-[#3f80d8] to-[#0452c8] font-bold text-white">Calcular</button>
            <span>http://ieureka.com.mx/innovo/</span>
          </div>
        </form>
        <div className="mt-[3px]">
          <Pod title="Sum:">
            <div className="h-[108px]">
              <PodLinks links={["Exact form", "Fewer digits", "More digits"]} />
              <div className="mt-3.5 flex items-center whitespace-nowrap pl-[25px] font-[Liberation_Serif,serif] text-[16px] text-black">
                <div className="flex w-8 flex-col items-center text-[12px] leading-[13px]">
                  <span>10 000</span>
                  <svg width="18" height="24" viewBox="0 0 18 24"><path d="M17 5.500L16.500 1H1l9 10.500L1 23h15.500l.7-5" fill="none" stroke="#000" strokeWidth="1.200" /></svg>
                  <span><i>n</i>=1</span>
                </div>
                <div className="mb-0.5 flex items-center pl-0.5">
                  <span className="text-[18px] font-bold italic">e</span>
                  <span className="mb-2.5 text-[12px]"><i>n</i>/10 000</span>
                  <span className="ml-1.5">≈</span>
                  <span className="ml-1">17 183.67743982369711099276261297312674454</span>
                </div>
              </div>
            </div>
          </Pod>
          <Pod title="Decimal approximation:">
            <div className="h-[82px]">
              <PodLinks links={["More digits"]} />
              <p className="mt-4 pl-[25px] font-[Liberation_Serif,serif] text-[16px] leading-6 text-black">
                17183.67743982369711099276261297312674453674716046557529999…
              </p>
            </div>
          </Pod>
          <Pod title="Partial sums:">
            <div className="h-[400px] pl-[23px] pt-[7px]">
              <PartialSumsChart />
            </div>
          </Pod>
        </div>
      </div>
    </div>
  );
}

function Scrollbar() {
  return (
    <div className="flex w-[15px] shrink-0 flex-col border-l border-white bg-[#f1f1f1] px-0.5">
      <span className="flex h-3.5 shrink-0 items-center justify-center">
        <svg width="8" height="5" viewBox="0 0 8 5"><path d="M4 0l4 4.500H0z" fill="#a3a3a3" /></svg>
      </span>
      <div className="flex-1"><div className="h-3/4 bg-[#c1c1c1]" /></div>
      <span className="flex h-3.5 shrink-0 items-center justify-center">
        <svg width="8" height="5" viewBox="0 0 8 5"><path d="M0 0h8L4 4.500z" fill="#505050" /></svg>
      </span>
    </div>
  );
}

export default function App() {
  return (
    <div className="flex h-screen flex-col overflow-hidden bg-[#3c3b37] font-['Open_Sans',sans-serif]">
      <TopBar />
      <div className="flex min-h-0 flex-1">
        <Launcher />
        <div className="flex min-w-0 flex-1 flex-col">
          <TabStrip />
          <Toolbar />
          <BookmarksBar />
          <div className="flex min-h-0 flex-1 font-[Liberation_Sans,sans-serif]">
            <main className="relative min-w-0 flex-1 overflow-hidden bg-white">
              <SiteHeader />
              <div className="bg-gradient-to-b from-[#5a5a5a] to-[#3a3a3a]">
                <div className="mx-auto flex h-[63px] w-[994px] items-center justify-between">
                  <h2 className="font-[Liberation_Serif,serif] text-[29px] text-[#f5f5f5]">Wolfram|Alpha Widgets</h2>
                  <a href="#" className="text-[13px] font-bold text-[#e02830]">Sign In</a>
                </div>
              </div>
              <div className="mx-auto flex w-[994px] items-start gap-3.5 pt-8">
                <WidgetPanel />
                <Sidebar />
              </div>
              <div className="absolute inset-0 flex justify-center overflow-hidden bg-black/40 pl-px">
                <WidgetDialog />
              </div>
            </main>
            <Scrollbar />
          </div>
        </div>
      </div>
    </div>
  );
}
